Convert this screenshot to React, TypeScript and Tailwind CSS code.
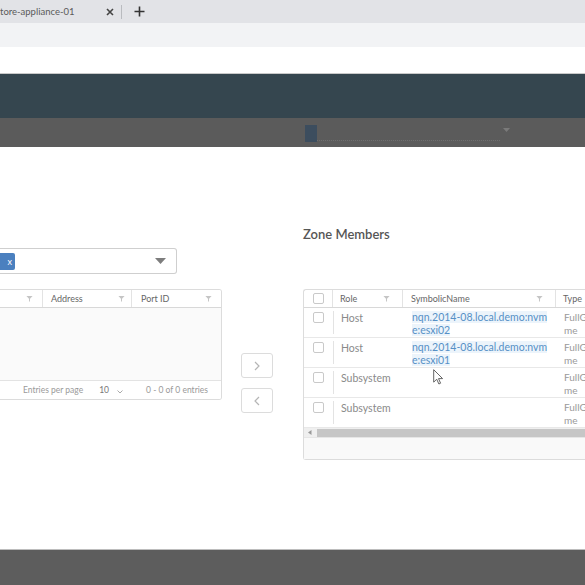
import React from "react";

const Filter = ({ className = "" }: { className?: string }) => (
  <svg width="7" height="7" viewBox="0 0 8 8" className={className}>
    <path d="M0.5 1h7L4.6 4.4V7.5H3.4V4.4z" fill="#c5c5c5" />
  </svg>
);

const Check = () => <div className="w-[11px] h-[11px] border border-[#c9c9c9] rounded-[2px] bg-white shrink-0" />;

export default function App() {
  const font = { fontFamily: "Lato, 'Open Sans', sans-serif" };
  const rows = [
    { role: "Host", name: ["nqn.2014-08.local.demo:nvm", "e:esxi02"] },
    { role: "Host", name: ["nqn.2014-08.local.demo:nvm", "e:esxi01"] },
    { role: "Subsystem", name: null },
    { role: "Subsystem", name: null },
  ];
  return (
    <div className="w-[585px] h-[585px] overflow-hidden flex flex-col bg-white relative" style={font}>
      {/* tab bar */}
      <div className="h-[23px] bg-[#e2e3e7] flex items-center shrink-0">
        <span className="w-[106px] text-[9.5px] text-[#5a5a5a] leading-none whitespace-nowrap">tore-appliance-01</span>
        <svg width="8" height="8" viewBox="0 0 8 8">
          <path d="M1 1l6 6M7 1L1 7" stroke="#444" strokeWidth="1.6" />
        </svg>
        <div className="ml-[7px] w-px h-[14px] bg-[#b9bbbf]" />
        <svg width="11" height="11" viewBox="0 0 11 11" className="ml-[12px]">
          <path d="M5.5 0.5v10M0.5 5.5h10" stroke="#333" strokeWidth="1.6" />
        </svg>
      </div>
      <div className="h-[24px] bg-[#f2f3f5] shrink-0" />
      <div className="h-[27px] bg-white border-b border-[#c9c9c9] shrink-0" />
      <div className="h-[44px] bg-[#35464f] shrink-0" />
      <div className="h-[29px] bg-[#5b5b5b] shrink-0 flex items-center pl-[305px]">
        <div className="w-[12px] h-[17px] bg-[#3c4d5e] mt-[1px]" />
        <div className="w-[183px] h-[16px] border-b border-dotted border-[#6e6e6e]" />
        <svg width="7" height="5" viewBox="0 0 7 5" className="ml-[3px] mb-[4px]">
          <path d="M0 0h7L3.5 4z" fill="#7a7a7a" />
        </svg>
      </div>

      {/* content */}
      <div className="flex-1 flex items-start">
        {/* left column */}
        <div className="w-[222px] shrink-0 pt-[101px]">
          <div className="w-[177px] h-[26px] border border-[#cfcfcf] border-l-0 rounded-r-[3px] flex items-center">
            <div className="w-[15px] h-[17px] bg-[#4b80bf] rounded-r-[2px] flex items-center justify-end pr-[3px]">
              <span className="text-white text-[9px] leading-none">x</span>
            </div>
            <div className="flex-1" />
            <svg width="11" height="6" viewBox="0 0 11 6" className="mr-[10px]">
              <path d="M0 0h11L5.5 6z" fill="#7d7d7d" />
            </svg>
          </div>
          <div className="mt-[15px] border border-[#dcdcdc] border-l-0 rounded-r-[3px] overflow-hidden">
            <div className="h-[18px] flex border-b border-[#d8d8d8] bg-white text-[9px] text-[#666]">
              <div className="w-[43px] flex items-center justify-end pr-[9px] border-r border-[#e3e3e3]">
                <Filter />
              </div>
              <div className="w-[89px] flex items-center pl-[8px] pr-[6px] border-r border-[#e3e3e3]">
                <span>Address</span>
                <div className="flex-1" />
                <Filter />
              </div>
              <div className="flex-1 flex items-center pl-[9px] pr-[9px]">
                <span>Port ID</span>
                <div className="flex-1" />
                <Filter />
              </div>
            </div>
            <div className="h-[72px] bg-[#fafafa]" />
            <div className="h-[19px] bg-white border-t border-[#e3e3e3] flex items-center text-[8.5px] text-[#9a9a9a]">
              <span className="ml-[23px]">Entries per page</span>
              <span className="ml-[16px] text-[#777]">10</span>
              <svg width="6" height="4" viewBox="0 0 6 4" className="ml-[8px] mt-[4px]">
                <path d="M0.5 0.5L3 3l2.5-2.5" stroke="#aaa" fill="none" />
              </svg>
              <span className="ml-[23px]">0 - 0 of 0 entries</span>
            </div>
          </div>
        </div>

        {/* middle buttons */}
        <div className="ml-[19px] pt-[206px] flex flex-col gap-[10px] shrink-0">
          <div className="w-[32px] h-[25px] border border-[#dcdcdc] rounded-[3px] flex items-center justify-center">
            <svg width="6" height="10" viewBox="0 0 6 10">
              <path d="M1 1l4 4-4 4" stroke="#b5b5b5" strokeWidth="1.2" fill="none" />
            </svg>
          </div>
          <div className="w-[32px] h-[25px] border border-[#dcdcdc] rounded-[3px] flex items-center justify-center">
            <svg width="6" height="10" viewBox="0 0 6 10">
              <path d="M5 1L1 5l4 4" stroke="#b5b5b5" strokeWidth="1.2" fill="none" />
            </svg>
          </div>
        </div>

        {/* right column */}
        <div className="ml-[30px] w-[300px] shrink-0 pt-[78px]">
          <div className="text-[13px] font-semibold text-[#565656] leading-[18px]">Zone Members</div>
          <div className="mt-[46px] border border-[#dcdcdc] rounded-l-[3px] border-r-0">
            <div className="h-[18px] flex border-b border-[#d8d8d8] text-[9px] text-[#666]">
              <div className="w-[29px] flex items-center pl-[9px] border-r border-[#e3e3e3]">
                <Check />
              </div>
              <div className="w-[70px] flex items-center pl-[7px] pr-[12px] border-r border-[#e3e3e3]">
                <span>Role</span>
                <div className="flex-1" />
                <Filter />
              </div>
              <div className="w-[153px] flex items-center pl-[8px] pr-[12px] border-r border-[#e3e3e3]">
                <span>SymbolicName</span>
                <div className="flex-1" />
                <Filter />
              </div>
              <div className="flex-1 flex items-center pl-[7px]">
                <span>Type</span>
              </div>
            </div>
            {rows.map((r, i) => (
              <div key={i} className="h-[30px] flex border-b border-[#e8e8e8] text-[10.5px]">
                <div className="w-[29px] flex items-start pt-[4px] pl-[9px] py-[3px]">
                  <Check />
                </div>
                <div className="w-px bg-[#e3e3e3] my-[3px]" />
                <div className="w-[70px] pl-[7px] pt-[3px] text-[#8a8a8a] leading-[14px]">{r.role}</div>
                <div className="w-[153px] pl-[8px] pt-[3px] leading-[13px] text-[#5690c6]">
                  {r.name && (
                    <>
                      <div><span className="bg-[#ecf4fb]">{r.name[0]}</span></div>
                      <div><span className="bg-[#ecf4fb]">{r.name[1]}</span></div>
                    </>
                  )}
                </div>
                <div className="flex-1 pl-[7px] pt-[3px] text-[#9a9a9a] text-[10px] leading-[13px]">
                  <div>FullG</div>
                  <div>me</div>
                </div>
              </div>
            ))}
            <div className="h-[9px] bg-[#efefef] flex items-center">
              <svg width="4" height="5" viewBox="0 0 4 5" className="ml-[4px]">
                <path d="M3.5 0L0 2.5 3.5 5z" fill="#999" />
              </svg>
              <div className="ml-[5px] flex-1 h-[8px] bg-[#c6c6c6]" />
            </div>
            <div className="h-[22px] bg-[#f9f9f9] border-t border-[#e6e6e6]" />
          </div>
        </div>
      </div>

      {/* bottom bar */}
      <div className="h-[36px] bg-[#5d5d5d] border-t border-[#bdbdbd] shrink-0" />

      {/* mouse cursor */}
      <svg width="11" height="16" viewBox="0 0 11 16" className="absolute left-[433px] top-[369px]">
        <path d="M0.7 0.7v12.5l3-3 2.2 4.8 1.7-0.8-2.1-4.6h4.1z" fill="white" stroke="#555" strokeWidth="0.9" />
      </svg>
    </div>
  );
}
